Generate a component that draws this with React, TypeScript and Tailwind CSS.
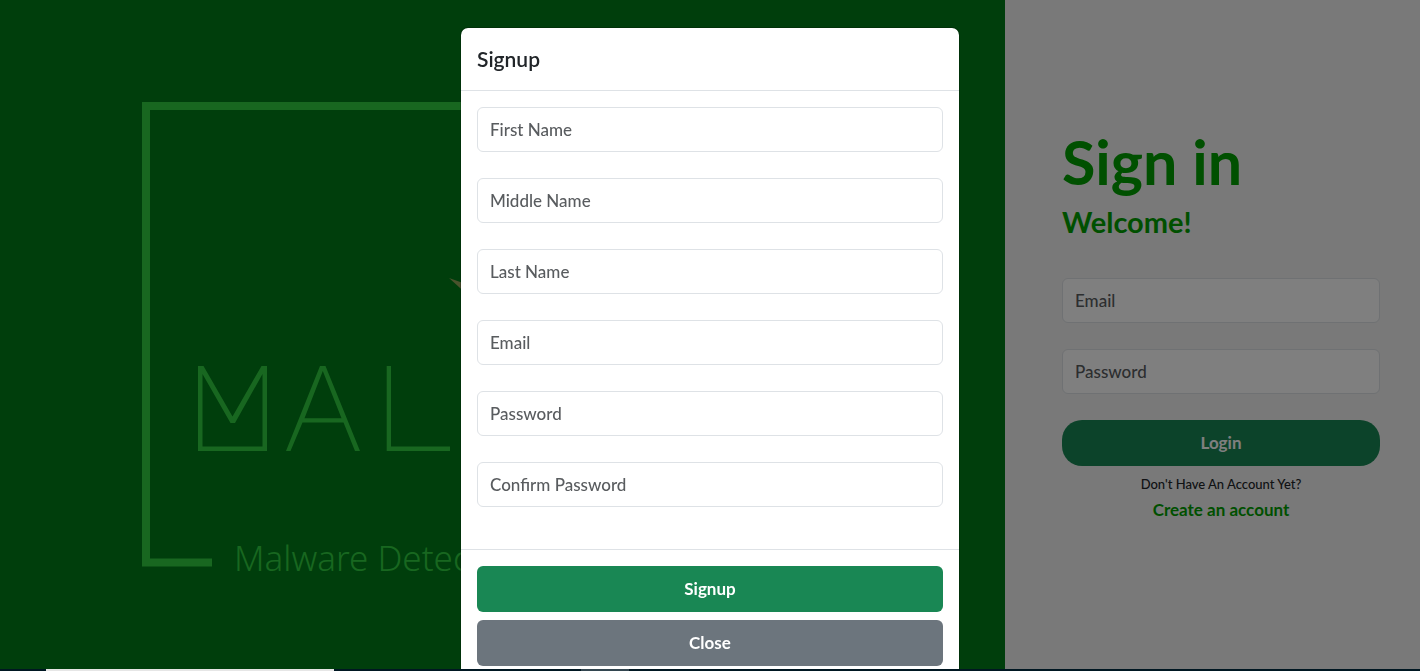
function Field({ label, type = "text" }: { label: string; type?: string }) {
  return (
    <input
      type={type}
      aria-label={label}
      placeholder={label}
      className="h-[45px] w-full min-w-0 rounded-md border border-[#dee2e6] bg-white px-3 text-[17px] font-medium text-[#212529] placeholder:text-[#595c5f] placeholder:opacity-100"
    />
  );
}

function Logo() {
  return (
    <svg viewBox="0 0 1005 669" className="h-full w-full" preserveAspectRatio="xMinYMin meet" aria-label="Malware Detection">
      <path d="M212 562.5H146V106H863V562.5H800" fill="none" stroke="#30ce40" strokeWidth="8" />
      <g fill="#30ce40" fillRule="evenodd">
        <path d="M198 366H203.500L232.500 416.500L261.500 366H267V451H198ZM202.500 374V446.500H262.500V374L235 423H230.500Z" />
        <path d="M320 366H325.500L360 451H355L343.500 422.500H302.500L290.500 451H286ZM322.800 371L304.500 418.200H341.500Z" />
        <path d="M386.700 366H391V446.500H450V451H386.700Z" />
      </g>
      <path d="M449 278L480 289L480 306Z" fill="#94a65a" />
      <text x="234" y="571" fontSize="35" fontWeight="300" fill="#30ce40" className="font-['Noto_Sans',sans-serif]">
        Malware Detection
      </text>
    </svg>
  );
}

export default function App() {
  return (
    <div className="flex h-screen flex-col overflow-hidden bg-[#f2f2f2] font-[Lato,sans-serif] text-[#212529]">
      <div className="flex min-h-0 flex-1">
        <main className="min-w-0 flex-1 bg-[#007c18]">
          <Logo />
        </main>
        <aside className="flex w-[415px] flex-col pt-32 pr-10 pl-[57px]">
          <h1 className="text-[61px] leading-[68px] font-bold text-[#00a000]">Sign in</h1>
          <h2 className="mt-[10px] text-[29px] leading-8 font-bold text-[#00a000]">Welcome!</h2>
          <form className="mt-10 flex flex-col gap-[26px]">
            <Field label="Email" type="email" />
            <Field label="Password" type="password" />
            <button type="button" className="h-[46px] rounded-[20px] bg-[#198754] text-[17px] font-bold text-white">
              Login
            </button>
          </form>
          <p className="mt-2 text-center text-[13px] leading-5 font-medium">Don't Have An Account Yet?</p>
          <a href="#signup" className="mt-1 text-center text-[17px] leading-6 font-bold text-[#00a000]">
            Create an account
          </a>
        </aside>
      </div>

      <div className="fixed inset-x-0 top-0 bottom-0.5 flex items-start justify-center overflow-hidden bg-black/50 pt-[27px]">
        <div role="dialog" aria-labelledby="signup-title" className="w-[500px] rounded-lg border border-black/20 bg-white bg-clip-padding">
          <header className="border-b border-[#dee2e6] p-4">
            <h2 id="signup-title" className="text-[21px] leading-[30px] font-semibold">
              Signup
            </h2>
          </header>
          <div className="flex flex-col gap-[26px] px-4 pt-4 pb-[42px]">
            <Field label="First Name" />
            <Field label="Middle Name" />
            <Field label="Last Name" />
            <Field label="Email" type="email" />
            <Field label="Password" type="password" />
            <Field label="Confirm Password" type="password" />
          </div>
          <footer className="flex flex-col gap-2 border-t border-[#dee2e6] p-4">
            <button type="button" className="h-[46px] rounded-md bg-[#198754] text-[17px] font-bold text-white">
              Signup
            </button>
            <button type="button" className="h-[46px] rounded-md bg-[#6c757d] text-[17px] font-bold text-white">
              Close
            </button>
          </footer>
        </div>
      </div>

      <div className="flex h-0.5 bg-[#001722] pl-[46px]">
        <div className="w-72 bg-[#e6e6e6]" />
        <div className="ml-[247px] w-12 bg-[#334650]" />
      </div>
    </div>
  );
}
